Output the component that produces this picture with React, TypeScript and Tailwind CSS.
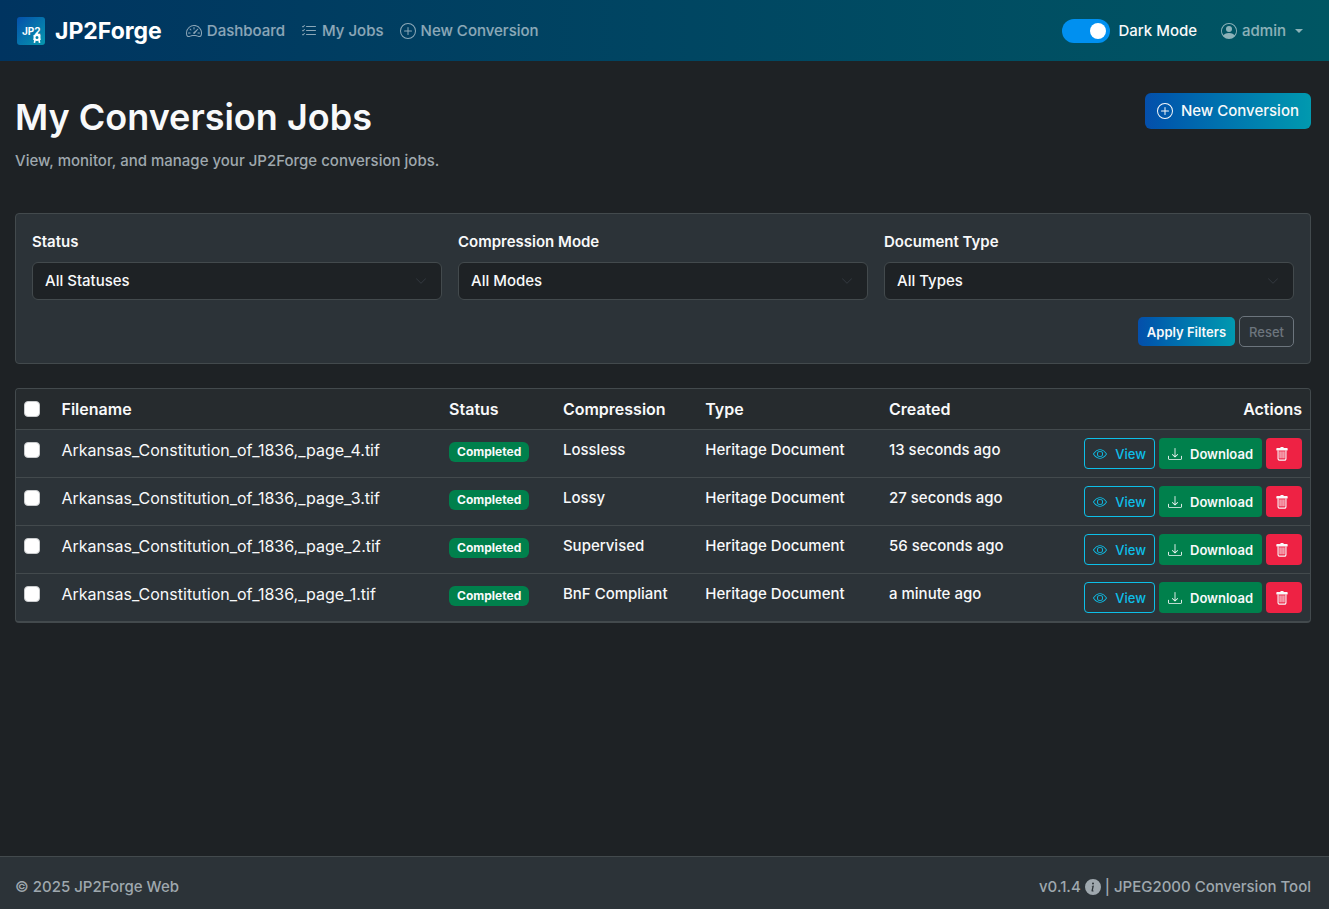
import { useState } from "react";
import {
  BsChevronDown,
  BsDownload,
  BsEye,
  BsInfoCircleFill,
  BsListCheck,
  BsPersonCircle,
  BsPlusCircle,
  BsSpeedometer2,
} from "react-icons/bs";

const jobs = [
  { file: "Arkansas_Constitution_of_1836,_page_4.tif", mode: "Lossless", created: "13 seconds ago" },
  { file: "Arkansas_Constitution_of_1836,_page_3.tif", mode: "Lossy", created: "27 seconds ago" },
  { file: "Arkansas_Constitution_of_1836,_page_2.tif", mode: "Supervised", created: "56 seconds ago" },
  { file: "Arkansas_Constitution_of_1836,_page_1.tif", mode: "BnF Compliant", created: "a minute ago" },
];

const filters = [
  { id: "status", label: "Status", options: ["All Statuses", "Completed"] },
  { id: "mode", label: "Compression Mode", options: ["All Modes", "Lossless", "Lossy", "Supervised", "BnF Compliant"] },
  { id: "type", label: "Document Type", options: ["All Types", "Heritage Document"] },
];

function Logo() {
  return (
    <svg viewBox="0 0 28 28" className="size-7 shrink-0" aria-hidden="true">
      <defs>
        <linearGradient id="logo-fill" x1="0" y1="0" x2="1" y2="1">
          <stop offset="0" stopColor="#0550ab" />
          <stop offset="1" stopColor="#0697ad" />
        </linearGradient>
      </defs>
      <rect width="28" height="28" rx="3" fill="url(#logo-fill)" />
      <text x="5" y="18" fontSize="10" fontWeight="700" fill="#fff">
        JP2
      </text>
      <circle cx="20" cy="20.5" r="2.5" fill="none" stroke="#fff" strokeWidth="2" />
      <path
        d="M20 15.8v2M18 23l-.6 2.8M22 23l.6 2.8M16.6 18.4l1.2.8M23.4 18.4l-1.2.8M16.4 22.6l1.4-.8M23.6 22.6l-1.4-.8"
        stroke="#fff"
        strokeWidth="1.6"
      />
    </svg>
  );
}

function TrashIcon() {
  return (
    <svg viewBox="0 0 16 16" className="size-3.5" fill="none" stroke="currentColor" aria-hidden="true">
      <path d="M2.5 1H6a1 1 0 0 1 1-1h2a1 1 0 0 1 1 1h3.5a1 1 0 0 1 1 1v1a1 1 0 0 1-1 1h-11a1 1 0 0 1-1-1V2a1 1 0 0 1 1-1z" fill="currentColor" stroke="none" />
      <path d="M3.5 4v9.5a1.5 1.5 0 0 0 1.5 1.5h6a1.5 1.5 0 0 0 1.5-1.5V4" strokeWidth="1.3" />
      <path d="M5.8 5.5v7M8 5.5v7M10.2 5.5v7" strokeLinecap="round" strokeWidth="1.1" />
    </svg>
  );
}

function Checkbox({ label }: { label: string }) {
  return (
    <input
      type="checkbox"
      aria-label={label}
      className="mt-1 block size-4 appearance-none rounded border border-[#c9cbcd] bg-white checked:bg-[#0090f0]"
    />
  );
}

export default function App() {
  const [dark, setDark] = useState(true);

  return (
    <div className="flex min-h-screen flex-col bg-[#1e2225] font-[Inter,sans-serif] text-[15px] leading-6 font-medium text-[#f8f9fa]">
      <header className="flex min-h-[61px] flex-wrap items-center bg-linear-to-r from-[#003460] to-[#005663] pr-[26px] pl-[17px]">
        <a href="#" className="mr-6 flex items-center gap-2.5 text-[23px] font-bold text-white">
          <Logo />
          JP2Forge
        </a>
        <nav className="flex items-center gap-4 text-white/55">
          <a href="#" className="flex items-center gap-[5px]">
            <BsSpeedometer2 className="size-4" />
            Dashboard
          </a>
          <a href="#" className="flex items-center gap-[5px]">
            <BsListCheck className="size-4" />
            My Jobs
          </a>
          <a href="#" className="flex items-center gap-[5px]">
            <BsPlusCircle className="size-4" />
            New Conversion
          </a>
        </nav>
        <div className="ml-auto flex items-center gap-6">
          <label className="flex items-center gap-2">
            <input
              type="checkbox"
              role="switch"
              checked={dark}
              onChange={(e) => setDark(e.target.checked)}
              className="flex h-6 w-12 appearance-none items-center rounded-full bg-[#495057] px-1 before:size-4 before:rounded-full before:bg-white checked:justify-end checked:bg-[#0090f0]"
            />
            Dark Mode
          </label>
          <button type="button" className="flex items-center gap-[5px] text-white/55">
            <BsPersonCircle className="size-4" />
            admin
            <span className="ml-1 border-x-4 border-t-4 border-x-transparent border-t-current" />
          </button>
        </div>
      </header>

      <main className="flex-1 pt-8 pr-[18px] pb-8 pl-[15px]">
        <div className="mb-10 flex items-start justify-between gap-4">
          <div>
            <h1 className="mb-2 text-[36px] leading-[48px] font-semibold">My Conversion Jobs</h1>
            <p className="text-[#9fa8ae]">View, monitor, and manage your JP2Forge conversion jobs.</p>
          </div>
          <button
            type="button"
            className="flex h-9 items-center gap-2 rounded-md bg-linear-to-r from-[#054fab] to-[#0299af] px-3"
          >
            <BsPlusCircle className="size-4" />
            New Conversion
          </button>
        </div>

        <form className="mb-6 rounded border border-[#434a4d] bg-[#2c3338] p-4" onSubmit={(e) => e.preventDefault()}>
          <div className="grid gap-4 md:grid-cols-3">
            {filters.map((f) => (
              <div key={f.id}>
                <label htmlFor={f.id} className="mb-2 block font-semibold">
                  {f.label}
                </label>
                <div className="grid items-center">
                  <select
                    id={f.id}
                    className="col-start-1 row-start-1 h-[38px] w-full appearance-none rounded-md border border-[#434a4d] bg-[#1e2225] px-3"
                  >
                    {f.options.map((o) => (
                      <option key={o}>{o}</option>
                    ))}
                  </select>
                  <BsChevronDown className="pointer-events-none col-start-1 row-start-1 mr-[15px] size-3 justify-self-end text-[#343a40]" />
                </div>
              </div>
            ))}
          </div>
          <div className="mt-4 flex items-center justify-end gap-1 text-[13px]">
            <button
              type="submit"
              className="h-[29px] rounded-[5px] bg-linear-to-r from-[#054fab] to-[#0299af] px-[9px] font-semibold"
            >
              Apply Filters
            </button>
            <button type="reset" className="h-[31px] rounded-[5px] border border-[#6c757d] px-[9px] text-[#6c757d]">
              Reset
            </button>
          </div>
        </form>

        <div className="overflow-x-auto rounded border border-b-2 border-[#434a4d] bg-[#2c3338]">
          <table className="w-full min-w-[1100px] table-fixed text-left">
            <colgroup>
              <col className="w-[2.9%]" />
              <col className="w-[29.95%]" />
              <col className="w-[8.8%]" />
              <col className="w-[11%]" />
              <col className="w-[14.2%]" />
              <col className="w-[13%]" />
              <col />
            </colgroup>
            <thead className="bg-[#262b2e] text-base">
              <tr className="border-b border-[#434a4d] align-top">
                <th className="p-2">
                  <Checkbox label="Select all jobs" />
                </th>
                <th className="p-2 font-semibold">Filename</th>
                <th className="p-2 font-semibold">Status</th>
                <th className="p-2 font-semibold">Compression</th>
                <th className="p-2 font-semibold">Type</th>
                <th className="p-2 font-semibold">Created</th>
                <th className="p-2 text-right font-semibold">Actions</th>
              </tr>
            </thead>
            <tbody>
              {jobs.map((job) => (
                <tr key={job.file} className="border-b border-[#434a4d] align-top last:border-b-0">
                  <td className="p-2">
                    <Checkbox label={`Select ${job.file}`} />
                  </td>
                  <td className="p-2 text-base font-normal">{job.file}</td>
                  <td className="p-2">
                    <span className="mt-1 block h-5 w-fit rounded-md bg-[#00804c] px-2 text-xs leading-5 font-bold">
                      Completed
                    </span>
                  </td>
                  <td className="p-2">{job.mode}</td>
                  <td className="p-2">Heritage Document</td>
                  <td className="p-2">{job.created}</td>
                  <td className="p-2">
                    <div className="flex justify-end gap-1 text-[13px]">
                      <a
                        href="#"
                        className="flex h-[31px] items-center gap-2 rounded border border-[#0dbfe8] px-2 text-[#0dbfe8]"
                      >
                        <BsEye className="size-3.5" />
                        View
                      </a>
                      <a
                        href="#"
                        className="flex h-[31px] items-center gap-2 rounded bg-[#00804c] px-[9px] font-semibold"
                      >
                        <BsDownload className="size-3.5" />
                        Download
                      </a>
                      <button
                        type="button"
                        aria-label={`Delete ${job.file}`}
                        className="flex h-[31px] w-9 items-center rounded bg-[#ee2244] px-[9px]"
                      >
                        <TrashIcon />
                      </button>
                    </div>
                  </td>
                </tr>
              ))}
            </tbody>
          </table>
        </div>
      </main>

      <footer className="flex flex-wrap justify-between gap-x-4 border-t border-[#434a4d] bg-[#2c3338] pt-[18px] pr-[18px] pb-2.5 pl-[15px] text-[#9fa8ae]">
        <span>© 2025 JP2Forge Web</span>
        <span className="flex items-center gap-1">
          v0.1.4 <BsInfoCircleFill className="size-4" /> | JPEG2000 Conversion Tool
        </span>
      </footer>
    </div>
  );
}
